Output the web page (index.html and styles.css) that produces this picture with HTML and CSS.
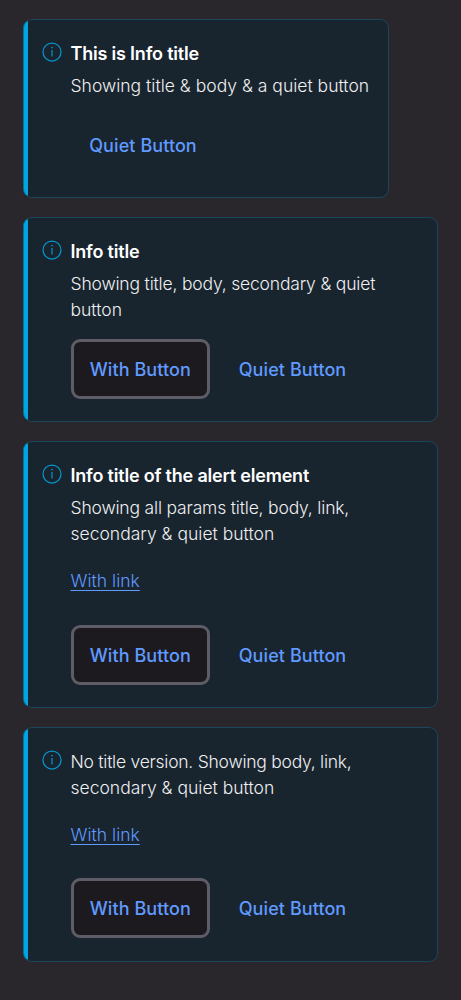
FILE: index.html
```
<!DOCTYPE html>
<html lang="en">
<head>
<meta charset="utf-8">
<title>Info alerts</title>
<link rel="stylesheet" href="styles.css">
</head>
<body>
<svg class="defs" aria-hidden="true"><symbol id="info" viewBox="0 0 20 20"><circle cx="10" cy="10" r="9" fill="none" stroke="currentColor" stroke-width="1.25"/><path d="M10 8v6.5" fill="none" stroke="currentColor" stroke-width="1.2"/><circle cx="10" cy="5.6" r=".85" fill="currentColor"/></symbol></svg>
<main class="stack">
  <section class="alert compact">
    <svg class="icon"><use href="#info"/></svg>
    <div class="content">
      <h2 class="title">This is Info title</h2>
      <p class="body">Showing title &amp; body &amp; a quiet button</p>
      <div class="actions"><button class="btn quiet">Quiet Button</button></div>
    </div>
  </section>
  <section class="alert second">
    <svg class="icon"><use href="#info"/></svg>
    <div class="content">
      <h2 class="title">Info title</h2>
      <p class="body"><span class="snug">Showing title, body, secondary &amp; quiet</span><br>button</p>
      <div class="actions"><button class="btn secondary">With Button</button><button class="btn quiet">Quiet Button</button></div>
    </div>
  </section>
  <section class="alert third">
    <svg class="icon"><use href="#info"/></svg>
    <div class="content">
      <h2 class="title">Info title of the alert element</h2>
      <p class="body"><span class="snug">Showing all params title, body, link,</span><br>secondary &amp; quiet button</p>
      <a class="link" href="#">With link</a>
      <div class="actions"><button class="btn secondary">With Button</button><button class="btn quiet">Quiet Button</button></div>
    </div>
  </section>
  <section class="alert fourth">
    <svg class="icon"><use href="#info"/></svg>
    <div class="content">
      <p class="body"><span class="tight">No title version. Showing body, link,</span><br>secondary &amp; quiet button</p>
      <a class="link" href="#">With link</a>
      <div class="actions"><button class="btn secondary">With Button</button><button class="btn quiet">Quiet Button</button></div>
    </div>
  </section>
</main>
</body>
</html>
```
FILE: styles.css
```
* { box-sizing: border-box; }
body { margin: 0; background: #29272c; color: #eeeff0; font: 300 17.5px/26px Inter, "Liberation Sans", sans-serif; }
.defs { display: block; width: 0; height: 0; }
.stack { display: flex; flex-direction: column; gap: 19px; padding: 19px 23px 38px; min-height: 1000px; }
.alert { display: flex; gap: 8.5px; width: 415px; padding: 21px 0 0 18px; background: linear-gradient(90deg, #00a5e2 4px, #18242e 4px); border: 1px solid #1c465b; border-left-color: #05719b; border-radius: 9px; }
.compact { width: 366px; height: 179px; }
.second { height: 205px; }
.third { height: 267px; }
.fourth { height: 235px; }
.icon { flex: none; width: 20px; height: 20px; margin-top: 1px; color: #0796cf; }
.content { display: flex; flex-direction: column; align-items: flex-start; }
.title { margin: 0 0 6px; font-size: 18px; line-height: 26px; font-weight: 600; color: #fff; white-space: nowrap; letter-spacing: -.2px; }
.body { margin: 0; white-space: nowrap; letter-spacing: .01px; }
.snug { letter-spacing: -.18px; }
.tight { letter-spacing: -.25px; }
.link { margin-top: 21px; color: #609aff; line-height: 26px; text-decoration-thickness: 1px; text-underline-offset: 3px; letter-spacing: .02px; }
.actions { display: flex; gap: 10px; margin-top: 16px; }
.link + .actions { margin-top: 31px; }
.fourth .link + .actions { margin-top: 30px; }
.btn { height: 60px; padding: 1px 0 0; border: 3px solid transparent; border-radius: 9px; background: transparent; color: #609aff; font: 500 18px/26px Inter, "Liberation Sans", sans-serif; letter-spacing: .08px; white-space: nowrap; }
.secondary { width: 139.5px; background: #1c1a1f; border-color: #5e5c66; }
.quiet { width: 145px; }
```
